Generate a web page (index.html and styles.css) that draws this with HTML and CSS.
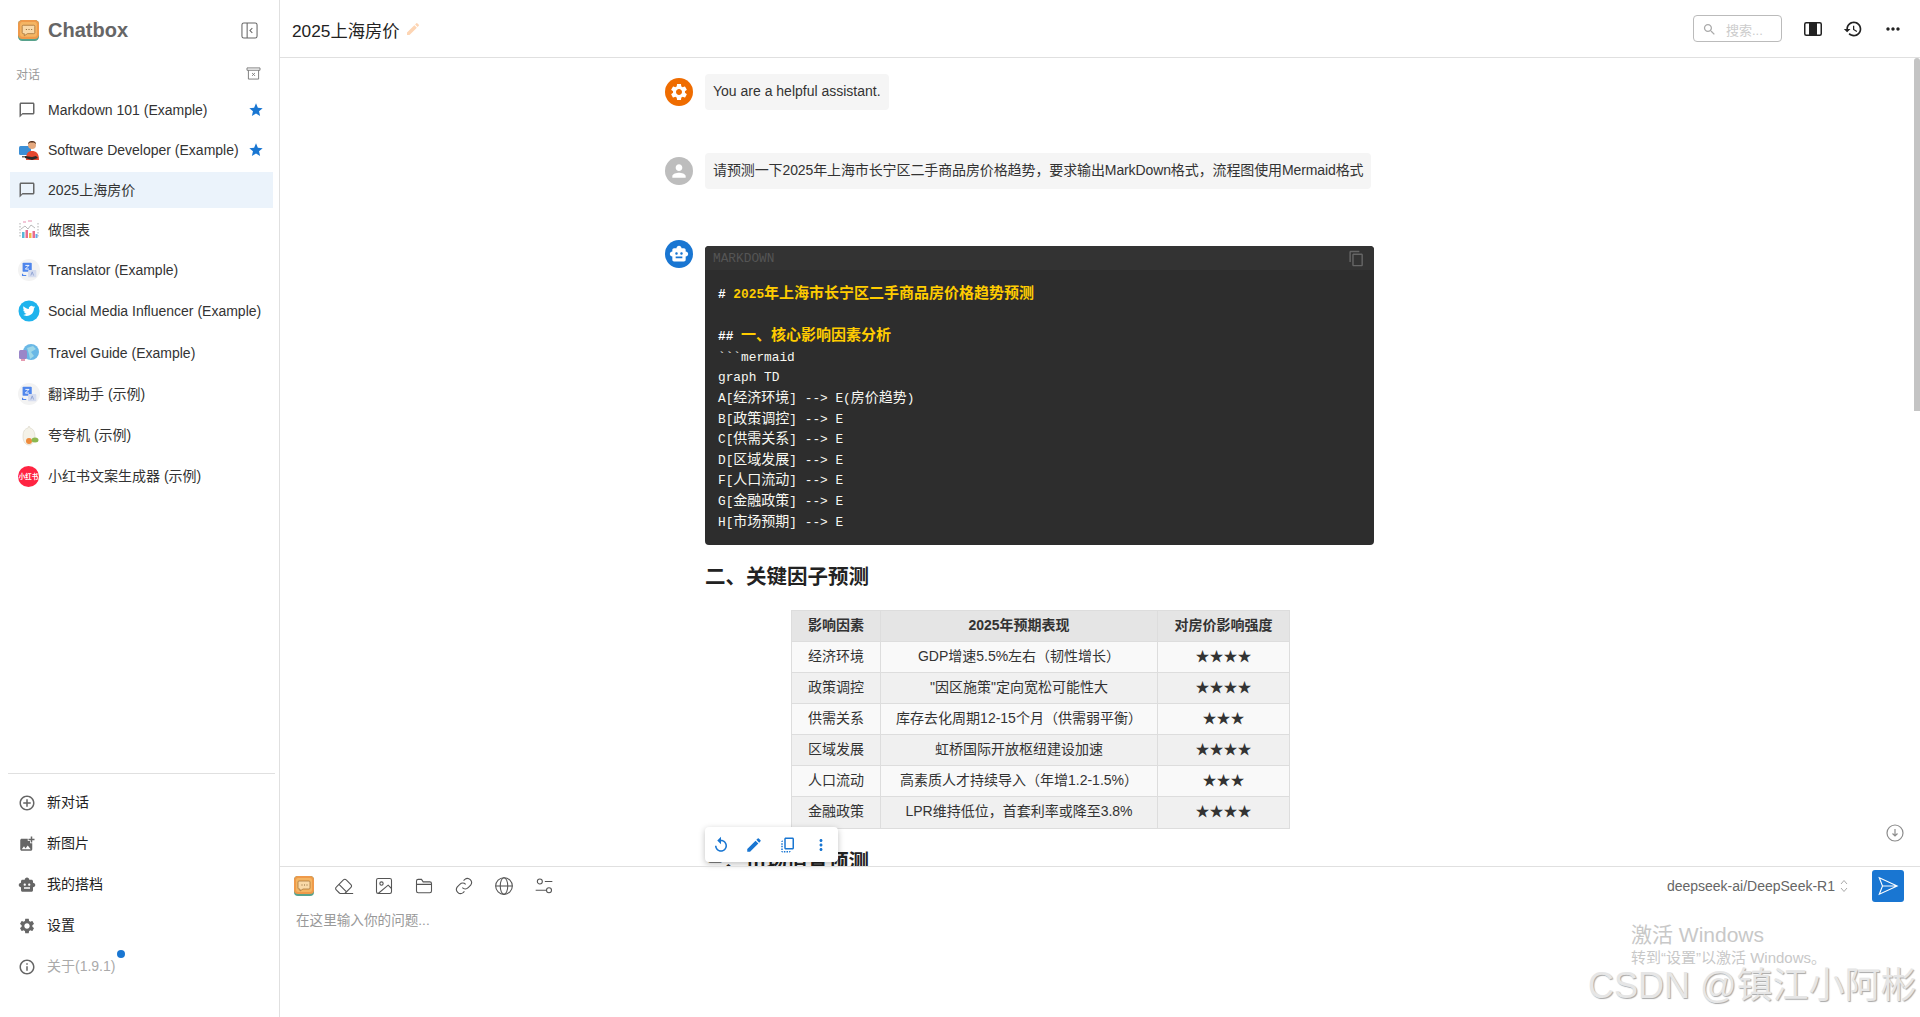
FILE: index.html
```html
<!DOCTYPE html>
<html lang="zh-CN">
<head>
  <meta charset="UTF-8">
  <title>Chatbox</title>
  <meta name="viewport" content="width=device-width, initial-scale=1.0">
  <link rel="stylesheet" href="styles.css">
</head>
<body>

  <svg class="sprites" width="0" height="0" aria-hidden="true">
    <symbol id="i-chat" viewBox="0 0 24 24"><path d="M20 2H4c-1.1 0-2 .9-2 2v18l4-4h14c1.1 0 2-.9 2-2V4c0-1.1-.9-2-2-2zm0 14H6l-2 2V4h16v12z"/></symbol>
    <symbol id="i-star" viewBox="0 0 24 24"><path d="M12 17.27 18.18 21l-1.64-7.03L22 9.24l-7.19-.61L12 2 9.19 8.63 2 9.24l5.46 4.73L5.82 21z"/></symbol>
    <symbol id="i-bot" viewBox="0 0 24 24"><path d="M20 9V7c0-1.1-.9-2-2-2h-3c0-1.66-1.34-3-3-3S9 3.34 9 5H6c-1.1 0-2 .9-2 2v2c-1.66 0-3 1.34-3 3s1.34 3 3 3v4c0 1.1.9 2 2 2h12c1.1 0 2-.9 2-2v-4c1.66 0 3-1.34 3-3s-1.34-3-3-3zM7.5 11.5c0-.83.67-1.5 1.5-1.5s1.5.67 1.5 1.5S9.83 13 9 13s-1.5-.67-1.5-1.5zM16 17H8v-2h8v2zm-1-4c-.83 0-1.5-.67-1.5-1.5S14.17 10 15 10s1.5.67 1.5 1.5S15.83 13 15 13z"/></symbol>
    <symbol id="i-gear" viewBox="0 0 24 24"><path d="M19.14 12.94c.04-.3.06-.61.06-.94 0-.32-.02-.64-.07-.94l2.03-1.58c.18-.14.23-.41.12-.61l-1.92-3.32c-.12-.22-.37-.29-.59-.22l-2.39.96c-.5-.38-1.03-.7-1.62-.94l-.36-2.54c-.04-.24-.24-.41-.48-.41h-3.84c-.24 0-.43.17-.47.41l-.36 2.54c-.59.24-1.13.57-1.62.94l-2.39-.96c-.22-.08-.47 0-.59.22L2.74 8.87c-.12.21-.08.47.12.61l2.03 1.58c-.05.3-.09.63-.09.94s.02.64.07.94l-2.03 1.58c-.18.14-.23.41-.12.61l1.92 3.32c.12.22.37.29.59.22l2.39-.96c.5.38 1.03.7 1.62.94l.36 2.54c.05.24.24.41.48.41h3.84c.24 0 .44-.17.47-.41l.36-2.54c.59-.24 1.13-.56 1.62-.94l2.39.96c.22.08.47 0 .59-.22l1.92-3.32c.12-.22.07-.47-.12-.61l-2.01-1.58zM12 15.6c-1.98 0-3.6-1.62-3.6-3.6s1.62-3.6 3.6-3.6 3.6 1.62 3.6 3.6-1.62 3.6-3.6 3.6z"/></symbol>
    <symbol id="i-edit" viewBox="0 0 24 24"><path d="M3 17.25V21h3.75L17.81 9.94l-3.75-3.75L3 17.25zM20.71 7.04c.39-.39.39-1.02 0-1.41l-2.34-2.34a.9959.9959 0 0 0-1.41 0l-1.83 1.83 3.75 3.75 1.83-1.83z"/></symbol>
    <symbol id="i-translate" viewBox="0 0 24 24">
      <circle cx="12" cy="12" r="12" fill="#f3f3f3"/>
      <rect x="5" y="4" width="10" height="10" rx="1" fill="#4f86ec"/>
      <rect x="11" y="12" width="9" height="8" rx="1" fill="#d5dcef"/>
      <path d="M8 7h4l-4 4h4" fill="none" stroke="#fff" stroke-width="1"/>
      <path d="M5 16v2h4" fill="none" stroke="#4f86ec" stroke-width="1.3"/>
      <path d="M14 18l1.5-4 1.5 4" fill="none" stroke="#8fa3d3" stroke-width="1"/>
    </symbol>
    <symbol id="i-logo" viewBox="0 0 20 20">
      <rect width="20" height="20" rx="4" fill="#58a28c"/>
      <rect width="20" height="18" rx="4" fill="#ef9a4a"/>
      <rect x="2" y="2" width="16" height="14" rx="2" fill="#f4b563"/>
      <path d="M5 5h10a1 1 0 0 1 1 1v6a1 1 0 0 1-1 1H9l-3 2v-2H5a1 1 0 0 1-1-1V6a1 1 0 0 1 1-1z" fill="#f9d9a8" stroke="#a8763c" stroke-width=".8"/>
      <path d="M7.5 9h1M10 9h1M12.500 9h1" stroke="#8c6a3a" stroke-width="1"/>
    </symbol>
  </svg>

  <div class="app">
    <aside class="sidebar">
      <div class="brand">
        <svg class="brand-logo"><use href="#i-logo"/></svg>
        <span class="brand-name">Chatbox</span>
        <svg class="toggle" viewBox="0 0 18 18" fill="none" stroke="#666" stroke-width="1.1"><rect x="1" y="1" width="16" height="16" rx="2"/><path d="M6.500 1v16M12 6.500 9.500 9l2.500 2.500"/></svg>
      </div>

      <div class="section-label">
        <span>对话</span>
        <svg class="archive" viewBox="0 0 16 14" fill="none" stroke="#777" stroke-width="1"><path d="M1 1h14v2.500H1zM2.500 3.500V13h11V3.500M6.500 6.500l3 3M9.500 6.500l-3 3"/></svg>
      </div>

      <ul class="conv-list">
        <li class="conv">
          <svg class="conv-icon"><use href="#i-chat"/></svg>
          <span class="conv-name">Markdown 101 (Example)</span>
          <svg class="conv-star"><use href="#i-star"/></svg>
        </li>
        <li class="conv">
          <svg class="avatar" viewBox="0 0 22 22">
            <rect x="1" y="7" width="12" height="9" rx="1.500" fill="#3b8fd6"/>
            <path d="M4 17h6v1.500H4z" fill="#666"/>
            <circle cx="14" cy="6" r="4" fill="#e5a97f"/>
            <path d="M10 5c0-4 8-4 8 0l-2-1.500h-4z" fill="#4a2a1a"/>
            <path d="M8 21c0-7 2-9 6-9s7 2 7 9z" fill="#e5472f"/>
            <path d="M7 17l7 1 4-1 2 2-6 2-7-2z" fill="#2b2b2b"/>
          </svg>
          <span class="conv-name">Software Developer (Example)</span>
          <svg class="conv-star"><use href="#i-star"/></svg>
        </li>
        <li class="conv active">
          <svg class="conv-icon"><use href="#i-chat"/></svg>
          <span class="conv-name cjk">2025上海房价</span>
        </li>
        <li class="conv">
          <svg class="avatar" viewBox="0 0 22 22">
            <path d="M2 4v15M20 4v15" stroke="#999" stroke-width=".8" stroke-dasharray="1.500 1.500"/>
            <path d="M3 10l4-3 3 3 3-4 4 3" fill="none" stroke="#aaa" stroke-width=".8"/>
            <path d="M5 3h3M10 2h4" stroke="#e58fb0" stroke-width="1.200"/>
            <rect x="4" y="13" width="2.500" height="6" fill="#58b6d8"/>
            <rect x="7.500" y="11" width="2.500" height="8" fill="#e96c8f"/>
            <rect x="11" y="14" width="2.500" height="5" fill="#f2b84b"/>
            <rect x="14.500" y="12" width="2.500" height="7" fill="#e96c8f"/>
            <rect x="17.500" y="15" width="2" height="4" fill="#6aa8e8"/>
          </svg>
          <span class="conv-name cjk">做图表</span>
        </li>
        <li class="conv tall">
          <svg class="avatar"><use href="#i-translate"/></svg>
          <span class="conv-name">Translator (Example)</span>
        </li>
        <li class="conv tall">
          <svg class="avatar" viewBox="0 0 22 22">
            <circle cx="11" cy="11" r="10.500" fill="#1eb3ed"/>
            <path transform="translate(4.700 4.700) scale(.52)" fill="#fff" d="M23.953 4.57a10 10 0 01-2.825.775 4.958 4.958 0 002.163-2.723c-.951.555-2.005.959-3.127 1.184a4.92 4.92 0 00-8.384 4.482C7.69 8.095 4.067 6.13 1.64 3.162a4.822 4.822 0 00-.666 2.475c0 1.71.87 3.213 2.188 4.096a4.904 4.904 0 01-2.228-.616v.06a4.923 4.923 0 003.946 4.827 4.996 4.996 0 01-2.212.085 4.936 4.936 0 004.604 3.417 9.867 9.867 0 01-6.102 2.105c-.39 0-.779-.023-1.17-.067a13.995 13.995 0 007.557 2.209c9.053 0 13.998-7.496 13.998-13.985 0-.21 0-.42-.015-.63A9.935 9.935 0 0024 4.59z"/>
          </svg>
          <span class="conv-name">Social Media Influencer (Example)</span>
        </li>
        <li class="conv tall">
          <svg class="avatar" viewBox="0 0 22 22">
            <circle cx="13" cy="10" r="8" fill="#6ab8e6"/>
            <path d="M9 6l6-2 3 3-5 3 3 4-4 3-1-5z" fill="#9fd8e8"/>
            <rect x="1" y="8" width="8" height="9" rx="1.500" fill="#9a86c8"/>
            <path d="M3 17h4v2H3z" fill="#e59ab0"/>
          </svg>
          <span class="conv-name">Travel Guide (Example)</span>
        </li>
        <li class="conv tall">
          <svg class="avatar"><use href="#i-translate"/></svg>
          <span class="conv-name cjk">翻译助手 (示例)</span>
        </li>
        <li class="conv tall">
          <svg class="avatar" viewBox="0 0 22 22">
            <path d="M11 1l1 2c4 1 5 5 5 9s-3 8-6 8-6-3-6-8 1-8 5-9z" fill="#f4f2e8" stroke="#d8d4c4" stroke-width=".6"/>
            <circle cx="11" cy="16" r="3" fill="#ee8a3c"/>
            <ellipse cx="17" cy="15" rx="3.500" ry="2.500" fill="#8cb84e"/>
          </svg>
          <span class="conv-name cjk">夸夸机 (示例)</span>
        </li>
        <li class="conv tall">
          <span class="xhs">小红书</span>
          <span class="conv-name cjk">小红书文案生成器 (示例)</span>
        </li>
      </ul>

      <nav class="side-nav">
        <div class="nav-item">
          <svg class="nav-icon" viewBox="0 0 24 24"><path d="M13 7h-2v4H7v2h4v4h2v-4h4v-2h-4V7zm-1-5C6.480 2 2 6.480 2 12s4.480 10 10 10 10-4.480 10-10S17.520 2 12 2zm0 18c-4.410 0-8-3.590-8-8s3.590-8 8-8 8 3.590 8 8-3.590 8-8 8z"/></svg>
          <span class="cjk">新对话</span>
        </div>
        <div class="nav-item">
          <svg class="nav-icon" viewBox="0 0 24 24"><path d="M19 7v2.990s-1.990.01-2 0V7h-3s.01-1.990 0-2h3V2h2v3h3v2h-3zm-3 4V8h-3V5H5c-1.100 0-2 .9-2 2v12c0 1.100.9 2 2 2h12c1.100 0 2-.9 2-2v-8h-3zM5 19l3-4 2 3 3-4 4 5H5z"/></svg>
          <span class="cjk">新图片</span>
        </div>
        <div class="nav-item">
          <svg class="nav-icon"><use href="#i-bot"/></svg>
          <span class="cjk">我的搭档</span>
        </div>
        <div class="nav-item">
          <svg class="nav-icon"><use href="#i-gear"/></svg>
          <span class="cjk">设置</span>
        </div>
        <div class="nav-item about">
          <svg class="nav-icon" viewBox="0 0 24 24"><path d="M11 7h2v2h-2zm0 4h2v6h-2zm1-9C6.480 2 2 6.480 2 12s4.480 10 10 10 10-4.480 10-10S17.520 2 12 2zm0 18c-4.410 0-8-3.590-8-8s3.590-8 8-8 8 3.590 8 8-3.590 8-8 8z"/></svg>
          <span class="about-label cjk">关于(1.9.1)<i class="dot"></i></span>
        </div>
      </nav>
    </aside>

    <main class="main">
      <header class="topbar">
        <h1 class="title">2025上海房价</h1>
        <svg class="title-edit"><use href="#i-edit"/></svg>
        <div class="topbar-right">
          <div class="search">
            <svg class="search-icon" viewBox="0 0 24 24"><path d="M15.500 14h-.79l-.28-.27C15.410 12.590 16 11.110 16 9.500 16 5.910 13.090 3 9.500 3S3 5.910 3 9.500 5.910 16 9.500 16c1.610 0 3.090-.59 4.230-1.570l.27.28v.79l5 4.990L20.490 19l-4.990-5zm-6 0C7.010 14 5 11.990 5 9.500S7.010 5 9.500 5 14 7.010 14 9.500 11.990 14 9.500 14z"/></svg>
            <span>搜索...</span>
          </div>
          <svg class="top-split" viewBox="0 0 18 14"><rect x=".75" y=".75" width="16.500" height="12.500" rx="1.500" fill="#fff" stroke="#222" stroke-width="1.500"/><rect x="5" y="1" width="8" height="12" fill="#222"/></svg>
          <svg class="top-icon history" viewBox="0 0 24 24"><path d="M13 3c-4.970 0-9 4.030-9 9H1l3.890 3.890.07.14L9 12H6c0-3.870 3.130-7 7-7s7 3.130 7 7-3.130 7-7 7c-1.930 0-3.680-.79-4.940-2.060l-1.420 1.420C8.270 19.990 10.510 21 13 21c4.970 0 9-4.030 9-9s-4.030-9-9-9zm-1 5v5l4.280 2.540.72-1.210-3.500-2.080V8H12z"/></svg>
          <svg class="top-icon" viewBox="0 0 24 24"><path d="M6 10c-1.100 0-2 .9-2 2s.9 2 2 2 2-.9 2-2-.9-2-2-2zm12 0c-1.100 0-2 .9-2 2s.9 2 2 2 2-.9 2-2-.9-2-2-2zm-6 0c-1.100 0-2 .9-2 2s.9 2 2 2 2-.9 2-2-.9-2-2-2z"/></svg>
        </div>
      </header>

      <section class="chat">
        <div class="chat-scroll">
          <div class="message">
            <span class="msg-avatar system"><svg><use href="#i-gear"/></svg></span>
            <div class="bubble">You are a helpful assistant.</div>
          </div>
          <div class="message">
            <span class="msg-avatar user"><svg viewBox="0 0 24 24"><path d="M12 12c2.210 0 4-1.790 4-4s-1.790-4-4-4-4 1.790-4 4 1.790 4 4 4zm0 2c-2.670 0-8 1.340-8 4v2h16v-2c0-2.660-5.330-4-8-4z"/></svg></span>
            <div class="bubble long">请预测一下2025年上海市长宁区二手商品房价格趋势，要求输出MarkDown格式，流程图使用Mermaid格式</div>
          </div>
          <div class="message reply">
            <span class="msg-avatar bot"><svg><use href="#i-bot"/></svg></span>
            <div class="reply-body">
              <div class="code-block">
                <div class="code-head">
                  <span>MARKDOWN</span>
                  <svg viewBox="0 0 24 24"><path d="M16 1H4c-1.100 0-2 .9-2 2v14h2V3h12V1zm3 4H8c-1.100 0-2 .9-2 2v14c0 1.100.9 2 2 2h11c1.100 0 2-.9 2-2V7c0-1.100-.9-2-2-2zm0 16H8V7h11v14z"/></svg>
                </div>
<pre class="code"><b class="mark"># </b><b class="hl">2025<span class="zh">年上海市长宁区二手商品房价格趋势预测</span></b>

<b class="mark">## </b><b class="hl"><span class="zh">一、核心影响因素分析</span></b>
```mermaid
graph TD
A[<span class="zh">经济环境</span>] --&gt; E(<span class="zh">房价趋势</span>)
B[<span class="zh">政策调控</span>] --&gt; E
C[<span class="zh">供需关系</span>] --&gt; E
D[<span class="zh">区域发展</span>] --&gt; E
F[<span class="zh">人口流动</span>] --&gt; E
G[<span class="zh">金融政策</span>] --&gt; E
H[<span class="zh">市场预期</span>] --&gt; E
</pre>
              </div>

              <h2 class="md-heading">二、关键因子预测</h2>
              <table class="md-table">
                <colgroup><col class="col-a"><col class="col-b"><col class="col-c"></colgroup>
                <thead>
                  <tr><th>影响因素</th><th>2025年预期表现</th><th>对房价影响强度</th></tr>
                </thead>
                <tbody>
                  <tr><td>经济环境</td><td>GDP增速5.5%左右（韧性增长）</td><td>★★★★</td></tr>
                  <tr><td>政策调控</td><td>"因区施策"定向宽松可能性大</td><td>★★★★</td></tr>
                  <tr><td>供需关系</td><td>库存去化周期12-15个月（供需弱平衡）</td><td>★★★</td></tr>
                  <tr><td>区域发展</td><td>虹桥国际开放枢纽建设加速</td><td>★★★★</td></tr>
                  <tr><td>人口流动</td><td>高素质人才持续导入（年增1.2-1.5%）</td><td>★★★</td></tr>
                  <tr class="last"><td>金融政策</td><td>LPR维持低位，首套利率或降至3.8%</td><td>★★★★</td></tr>
                </tbody>
              </table>
              <h2 class="md-heading next">三、市场情景预测</h2>
            </div>
          </div>
        </div>
        <div class="scrollbar"><div class="scroll-thumb"></div></div>

        <!-- hover toolbar sits over the message -->
        <div class="msg-tools">
          <svg viewBox="0 0 24 24"><path d="M12 5V1L7 6l5 5V7c3.310 0 6 2.690 6 6s-2.690 6-6 6-6-2.690-6-6H4c0 4.420 3.580 8 8 8s8-3.580 8-8-3.580-8-8-8z"/></svg>
          <svg><use href="#i-edit"/></svg>
          <svg viewBox="0 0 24 24"><path d="M18 2H9c-1.100 0-2 .9-2 2v12c0 1.100.9 2 2 2h9c1.100 0 2-.9 2-2V4c0-1.100-.9-2-2-2zm0 14H9V4h9v12zM3 15v-2h2v2H3zm0-5.500h2v2H3v-2zM10 20h2v2h-2v-2zm-7-1.500v-2h2v2H3zM5 22c-1.100 0-2-.9-2-2h2v2zm3.500 0h-2v-2h2v2zm5 0v-2h2c0 1.100-.9 2-2 2zM5 6v2H3c0-1.100.9-2 2-2z"/></svg>
          <svg viewBox="0 0 24 24"><path d="M12 8c1.100 0 2-.9 2-2s-.9-2-2-2-2 .9-2 2 .9 2 2 2zm0 2c-1.100 0-2 .9-2 2s.9 2 2 2 2-.9 2-2-.9-2-2-2zm0 6c-1.100 0-2 .9-2 2s.9 2 2 2 2-.9 2-2-.9-2-2-2z"/></svg>
        </div>
        <svg class="scroll-down" viewBox="0 0 20 20" fill="none" stroke="#8c8c8c" stroke-width="1.200"><circle cx="10" cy="10" r="8"/><path d="M10 6v7M7.500 10.500 10 13l2.500-2.500"/></svg>
      </section>

      <footer class="composer">
        <div class="composer-bar">
          <div class="tool-icons">
            <svg class="tool-logo"><use href="#i-logo"/></svg>
            <svg viewBox="0 0 24 24"><path d="m7 21-4.300-4.300c-1-1-1-2.500 0-3.400l8.600-8.600c1-1 2.500-1 3.400 0l5.600 5.600c1 1 1 2.500 0 3.400L13 21"/><path d="M23 21H7M6 10l9 9"/></svg>
            <svg viewBox="0 0 24 24"><rect x="3" y="3" width="18" height="18" rx="2"/><circle cx="9" cy="9" r="2"/><path d="m21 15-4-4L5 21"/></svg>
            <svg viewBox="0 0 24 24"><path d="M3 18V6a2 2 0 0 1 2-2h4l2 3h8a2 2 0 0 1 2 2v9a2 2 0 0 1-2 2H5a2 2 0 0 1-2-2zM3 10h18"/></svg>
            <svg viewBox="0 0 24 24"><path d="M10 14a5 5 0 0 0 7 0l3-3a5 5 0 0 0-7-7l-1.500 1.500"/><path d="M14 10a5 5 0 0 0-7 0l-3 3a5 5 0 0 0 7 7l1.500-1.500"/></svg>
            <svg viewBox="0 0 24 24"><circle cx="12" cy="12" r="10"/><ellipse cx="12" cy="12" rx="4.500" ry="10"/><path d="M2 12h20"/></svg>
            <svg viewBox="0 0 24 24"><circle cx="7" cy="6.500" r="3"/><path d="M13 6.500h9M2 17h13"/><circle cx="18" cy="17" r="3"/></svg>
          </div>
          <div class="composer-right">
            <span class="model">deepseek-ai/DeepSeek-R1</span>
            <svg class="updown" viewBox="0 0 8 14" fill="none" stroke="#aaa"><path d="M1 5l3-3.500L7 5M1 9l3 3.500L7 9"/></svg>
            <button class="send"><svg viewBox="0 0 24 24" fill="none" stroke="#fff" stroke-width="1.200"><path d="M2.500 3 22 12 2.500 21 6 12zM6 12h16"/></svg></button>
          </div>
        </div>
        <div class="placeholder">在这里输入你的问题...</div>

        <div class="activate">
          <div class="activate-title">激活 Windows</div>
          <div class="activate-sub">转到“设置”以激活 Windows。</div>
        </div>
        <div class="watermark">CSDN @镇江小阿彬</div>
      </footer>
    </main>
  </div>

</body>
</html>
```

FILE: styles.css
```css
* {
  box-sizing: border-box;
}
body {
  margin: 0;
  height: 100vh;
  overflow: hidden;
  background: #fff;
  color: #222;
  font-family: "Liberation Sans", "Noto Sans CJK SC", sans-serif;
  font-size: 14px;
}
.sprites {
  position: absolute;
}
.app {
  display: flex;
  height: 100%;
}

/* Sidebar */
.sidebar {
  width: 280px;
  flex-shrink: 0;
  display: flex;
  flex-direction: column;
  border-right: 1px solid #e0e0e0;
}
.brand {
  height: 60px;
  display: flex;
  align-items: center;
  padding: 0 21px 0 18px;
}
.brand-logo {
  width: 21px;
  height: 21px;
}
.brand-name {
  margin-left: 9px;
  font-size: 20px;
  font-weight: bold;
  color: #666;
}
.toggle {
  margin-left: auto;
  width: 17px;
  height: 17px;
}
.section-label {
  height: 27px;
  display: flex;
  align-items: center;
  justify-content: space-between;
  padding: 0 18px 0 16px;
  font-size: 12px;
  color: #999;
}
.archive {
  width: 15px;
  height: 13px;
}
.conv-list {
  list-style: none;
  margin: 5px 6px 0 10px;
  padding: 0;
  flex: 1;
}
.conv {
  height: 36px;
  margin-bottom: 4px;
  padding: 0 9px 0 8px;
  display: flex;
  align-items: center;
  gap: 8px;
}
.conv.tall {
  margin-bottom: 5.4px;
}
.conv.active {
  background: #ebf3fb;
}
.conv-icon {
  width: 18px;
  height: 18px;
  margin-right: 4px;
  fill: #666;
}
.avatar {
  width: 22px;
  height: 22px;
  flex-shrink: 0;
}
.xhs {
  width: 21px;
  height: 21px;
  flex-shrink: 0;
  margin-right: 1px;
  border-radius: 50%;
  background: #ff2442;
  color: #fff;
  font-size: 6.5px;
  font-weight: bold;
  line-height: 21px;
  text-align: center;
}
.conv-name {
  flex: 1;
  white-space: nowrap;
  color: #333;
}
/* the CJK font sits a little low in its line box */
.cjk {
  position: relative;
  top: -1.5px;
}
.conv-star {
  width: 16px;
  height: 16px;
  fill: #1976d2;
}
.side-nav {
  margin: 0 4px 30px 8px;
  padding-top: 8px;
  border-top: 1px solid #e0e0e0;
}
.nav-item {
  height: 41px;
  display: flex;
  align-items: center;
  gap: 11px;
  padding-left: 10px;
  color: #222;
}
.nav-icon {
  width: 18px;
  height: 18px;
  fill: #666;
}
.about-label {
  color: #aaa;
}
.dot {
  position: absolute;
  top: -5px;
  right: -10px;
  width: 8px;
  height: 8px;
  border-radius: 50%;
  background: #1976d2;
}

/* Top bar */
.main {
  flex: 1;
  min-width: 0;
  display: flex;
  flex-direction: column;
}
.topbar {
  height: 58px;
  flex-shrink: 0;
  display: flex;
  align-items: center;
  padding: 0 17px 0 12px;
  border-bottom: 1px solid #e0e0e0;
}
.title {
  margin: 0;
  padding-top: 1px;
  font-size: 17.3px;
  font-weight: normal;
}
.title-edit {
  width: 16px;
  height: 16px;
  margin-left: 5px;
  fill: #fdd5b4;
}
.topbar-right {
  margin-left: auto;
  display: flex;
  align-items: center;
}
.search {
  width: 89px;
  height: 27px;
  display: flex;
  align-items: center;
  gap: 9px;
  padding: 1px 0 0 8px;
  border: 1px solid #bbb;
  border-radius: 4px;
  font-size: 13px;
  color: #ccc;
}
.search-icon {
  width: 15px;
  height: 15px;
  fill: #aaa;
}
.top-split {
  width: 18px;
  height: 14px;
  margin-left: 22px;
}
.top-icon {
  width: 20px;
  height: 20px;
  fill: #222;
  margin-left: 20px;
}
.top-icon.history {
  margin-left: 21px;
}

/* Chat area */
.chat {
  position: relative;
  flex: 1;
  min-height: 0;
  display: flex;
}
.chat-scroll {
  flex: 1;
  min-width: 0;
  overflow: hidden;
  padding: 16px 0 0 385px;
}
.scrollbar {
  width: 6px;
  flex-shrink: 0;
}
.scroll-thumb {
  height: 353px;
  background: #c4c4c4;
  border-radius: 3px 3px 0 0;
}
.message {
  display: flex;
  gap: 12px;
  margin-bottom: 43px;
}
.message.reply {
  margin-top: 51px;
}
.msg-avatar {
  width: 28px;
  height: 28px;
  flex-shrink: 0;
  margin-top: 4px;
  border-radius: 50%;
  display: flex;
  align-items: center;
  justify-content: center;
}
.reply .msg-avatar {
  margin-top: 0;
}
.msg-avatar svg {
  width: 20px;
  height: 20px;
  fill: #fff;
}
.system {
  background: #ef6c00;
}
.user {
  background: #bdbdbd;
}
.bot {
  background: #1976d2;
}
.bubble {
  height: 36px;
  padding: 0 8px;
  line-height: 34px;
  background: #f5f5f5;
  border-radius: 4px;
  color: #333;
  white-space: nowrap;
}
.bubble.long {
  letter-spacing: -0.11px;
}
.reply-body {
  width: 669px;
  padding-top: 6px;
}
.code-block {
  background: #2d2d2d;
  border-radius: 4px;
  overflow: hidden;
}
.code-head {
  height: 24px;
  display: flex;
  align-items: center;
  justify-content: space-between;
  padding: 1px 9px 0 8px;
  background: #333;
  color: #555;
  font-family: "Liberation Mono", monospace;
  font-size: 12.8px;
}
.code-head svg {
  width: 17px;
  height: 17px;
  fill: #666;
}
.code {
  margin: 0;
  padding: 14px 13px 12px;
  font-family: "Liberation Mono", "Noto Sans CJK SC", monospace;
  font-size: 12.8px;
  line-height: 20.6px;
  color: #f8f8f2;
}
.zh {
  font-family: "Noto Sans CJK SC", sans-serif;
  font-size: 14px;
  line-height: 1;
}
.mark {
  color: #fff;
}
.hl {
  color: #ffcc00;
}
.hl .zh {
  font-size: 15px;
}
.md-heading {
  margin: 17px 0 18px;
  font-size: 20.5px;
  line-height: 30px;
  font-weight: bold;
  color: #222;
}
.md-heading.next {
  margin: 18px 0 0;
}
.md-table {
  width: 498px;
  margin: 0 0 0 86px;
  border-collapse: collapse;
  table-layout: fixed;
  color: #333;
}
.col-a {
  width: 89px;
}
.col-b {
  width: 277px;
}
.col-c {
  width: 132px;
}
.md-table th,
.md-table td {
  height: 31px;
  padding: 0 0 3px;
  border: 1px solid #ddd;
  text-align: center;
  line-height: 20px;
}
.md-table th {
  background: #e5e5e5;
}
.md-table tbody tr {
  background: #f9f9f9;
}
.md-table tbody tr:nth-child(even) {
  background: #f0f0f0;
}
.md-table .last td {
  height: 32px;
}
.msg-tools {
  position: absolute;
  left: 425px;
  bottom: 4px;
  width: 133px;
  height: 35px;
  display: flex;
  align-items: center;
  justify-content: space-between;
  padding: 0 8px 0 7px;
  background: #fff;
  border-radius: 4px;
  box-shadow: 0 2px 6px rgba(0,0,0,0.25);
}
.msg-tools svg {
  width: 18px;
  height: 18px;
  fill: #1976d2;
}
.scroll-down {
  position: absolute;
  right: 15px;
  bottom: 23px;
  width: 20px;
  height: 20px;
}

/* Composer */
.composer {
  position: relative;
  height: 151px;
  flex-shrink: 0;
  border-top: 1px solid #e0e0e0;
  padding: 3px 16px 0 14px;
}
.composer-bar {
  display: flex;
  align-items: center;
  justify-content: space-between;
  height: 32px;
}
.tool-icons {
  display: flex;
  align-items: center;
  gap: 20px;
}
.tool-icons svg {
  width: 20px;
  height: 20px;
  fill: none;
  stroke: #555;
  stroke-width: 1.3;
}
.tool-icons .tool-logo {
  stroke: none;
}
.composer-right {
  display: flex;
  align-items: center;
}
.model {
  color: #666;
}
.updown {
  width: 8px;
  height: 14px;
  margin-left: 5px;
}
.send {
  width: 32px;
  height: 32px;
  margin-left: 24px;
  padding: 5px;
  border: none;
  border-radius: 3px;
  background: #1976d2;
}
.send svg {
  display: block;
  width: 22px;
  height: 22px;
}
.placeholder {
  margin: 9px 0 0 2px;
  font-size: 13.6px;
  line-height: 20px;
  color: #999;
}
.activate {
  position: absolute;
  left: 1351px;
  top: 55px;
  color: #c8c8c8;
  white-space: nowrap;
}
.activate-title {
  font-size: 21px;
  line-height: 26px;
}
.activate-sub {
  font-size: 15px;
  line-height: 20px;
}
.watermark {
  position: absolute;
  left: 1308px;
  top: 94px;
  font-size: 36px;
  line-height: 50px;
  color: #e6e6e6;
  text-shadow: 1px 1px 1px #a8a8a8;
  white-space: nowrap;
}
```
